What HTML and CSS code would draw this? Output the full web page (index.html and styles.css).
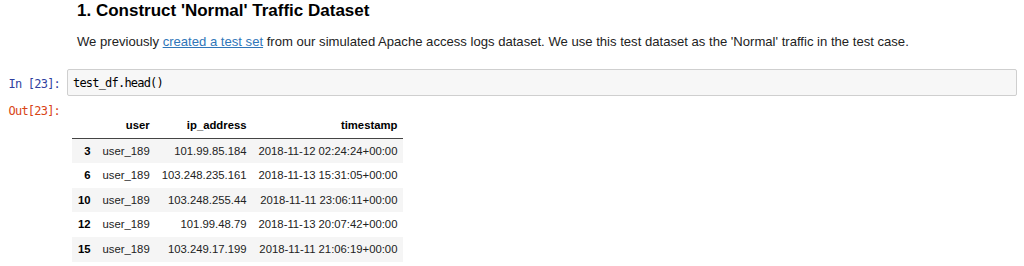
FILE: index.html
```html
<!DOCTYPE html>
<html>
<head>
<meta charset="utf-8">
<link rel="stylesheet" href="styles.css">
</head>
<body>
<div class="nb">
  <div class="cell md">
    <div class="prompt"></div>
    <div class="md-content">
      <h2 class="title">1. Construct 'Normal' Traffic Dataset</h2>
      <p class="para">We previously <a class="link" href="#">created a test set</a> from our simulated Apache access logs dataset. We use this test dataset as the 'Normal' traffic in the test case.</p>
    </div>
  </div>
  <div class="cell code">
    <div class="prompt in">In&nbsp;[23]:</div>
    <div class="input">test_df.head()</div>
  </div>
  <div class="cell output">
    <div class="prompt out">Out[23]:</div>
    <div class="out-area">
      <table class="df">
        <thead>
          <tr><th></th><th>user</th><th>ip_address</th><th>timestamp</th></tr>
        </thead>
        <tbody>
          <tr><th>3</th><td>user_189</td><td>101.99.85.184</td><td>2018-11-12 02:24:24+00:00</td></tr>
          <tr><th>6</th><td>user_189</td><td>103.248.235.161</td><td>2018-11-13 15:31:05+00:00</td></tr>
          <tr><th>10</th><td>user_189</td><td>103.248.255.44</td><td>2018-11-11 23:06:11+00:00</td></tr>
          <tr><th>12</th><td>user_189</td><td>101.99.48.79</td><td>2018-11-13 20:07:42+00:00</td></tr>
          <tr><th>15</th><td>user_189</td><td>103.249.17.199</td><td>2018-11-11 21:06:19+00:00</td></tr>
        </tbody>
      </table>
    </div>
  </div>
</div>
</body>
</html>
```

FILE: styles.css
```css
html, body {
  margin: 0;
  padding: 0;
  background: #fff;
}
body {
  font-family: "Liberation Sans", Arial, sans-serif;
  color: #000;
  width: 1024px;
}
.nb {
  padding-right: 7px;
}
.cell {
  display: flex;
  align-items: flex-start;
}
.prompt {
  flex: 0 0 60px;
  width: 60px;
  margin-right: 7px;
  text-align: right;
  font-family: "DejaVu Sans Mono", monospace;
  font-size: 12px;
  letter-spacing: -0.8px;
  line-height: 15px;
  white-space: nowrap;
}
.md {
  padding-top: 1px;
}
.md-content {
  flex: 1;
  padding-left: 10px;
}
.title {
  margin: 0;
  font-size: 17px;
  line-height: 20px;
  font-weight: bold;
  color: #000;
}
.para {
  margin: 11px 0 0 0;
  font-size: 13.1px;
  line-height: 20px;
  color: #222;
}
.link {
  color: #2f76b9;
  text-decoration: underline;
}
.code {
  margin-top: 17px;
}
.prompt.in {
  color: #303f9f;
  padding-top: 8px;
}
.input {
  flex: 1;
  box-sizing: border-box;
  height: 27px;
  border: 1px solid #cfcfcf;
  border-radius: 2px;
  background: #f7f7f7;
  padding: 0 5px;
  font-family: "DejaVu Sans Mono", monospace;
  font-size: 12px;
  letter-spacing: -0.8px;
  line-height: 25px;
  padding-top: 1px;
  color: #000;
}
.output {
  margin-top: 8px;
}
.prompt.out {
  color: #d84315;
}
.out-area {
  flex: 1;
  padding-left: 5px;
  padding-top: 9px;
}
.df {
  border-collapse: collapse;
  border-spacing: 0;
  font-size: 11.3px;
  color: #222;
}
.df th, .df td {
  text-align: right;
  padding: 6px 6px;
  line-height: 12.6px;
  white-space: nowrap;
  vertical-align: middle;
}
.df th {
  font-weight: bold;
  color: #000;
}
.df td {
  font-weight: normal;
}
.df thead tr {
  border-bottom: 1px solid #444;
}
.df tbody tr:nth-child(odd) {
  background: #f5f5f5;
}
```
